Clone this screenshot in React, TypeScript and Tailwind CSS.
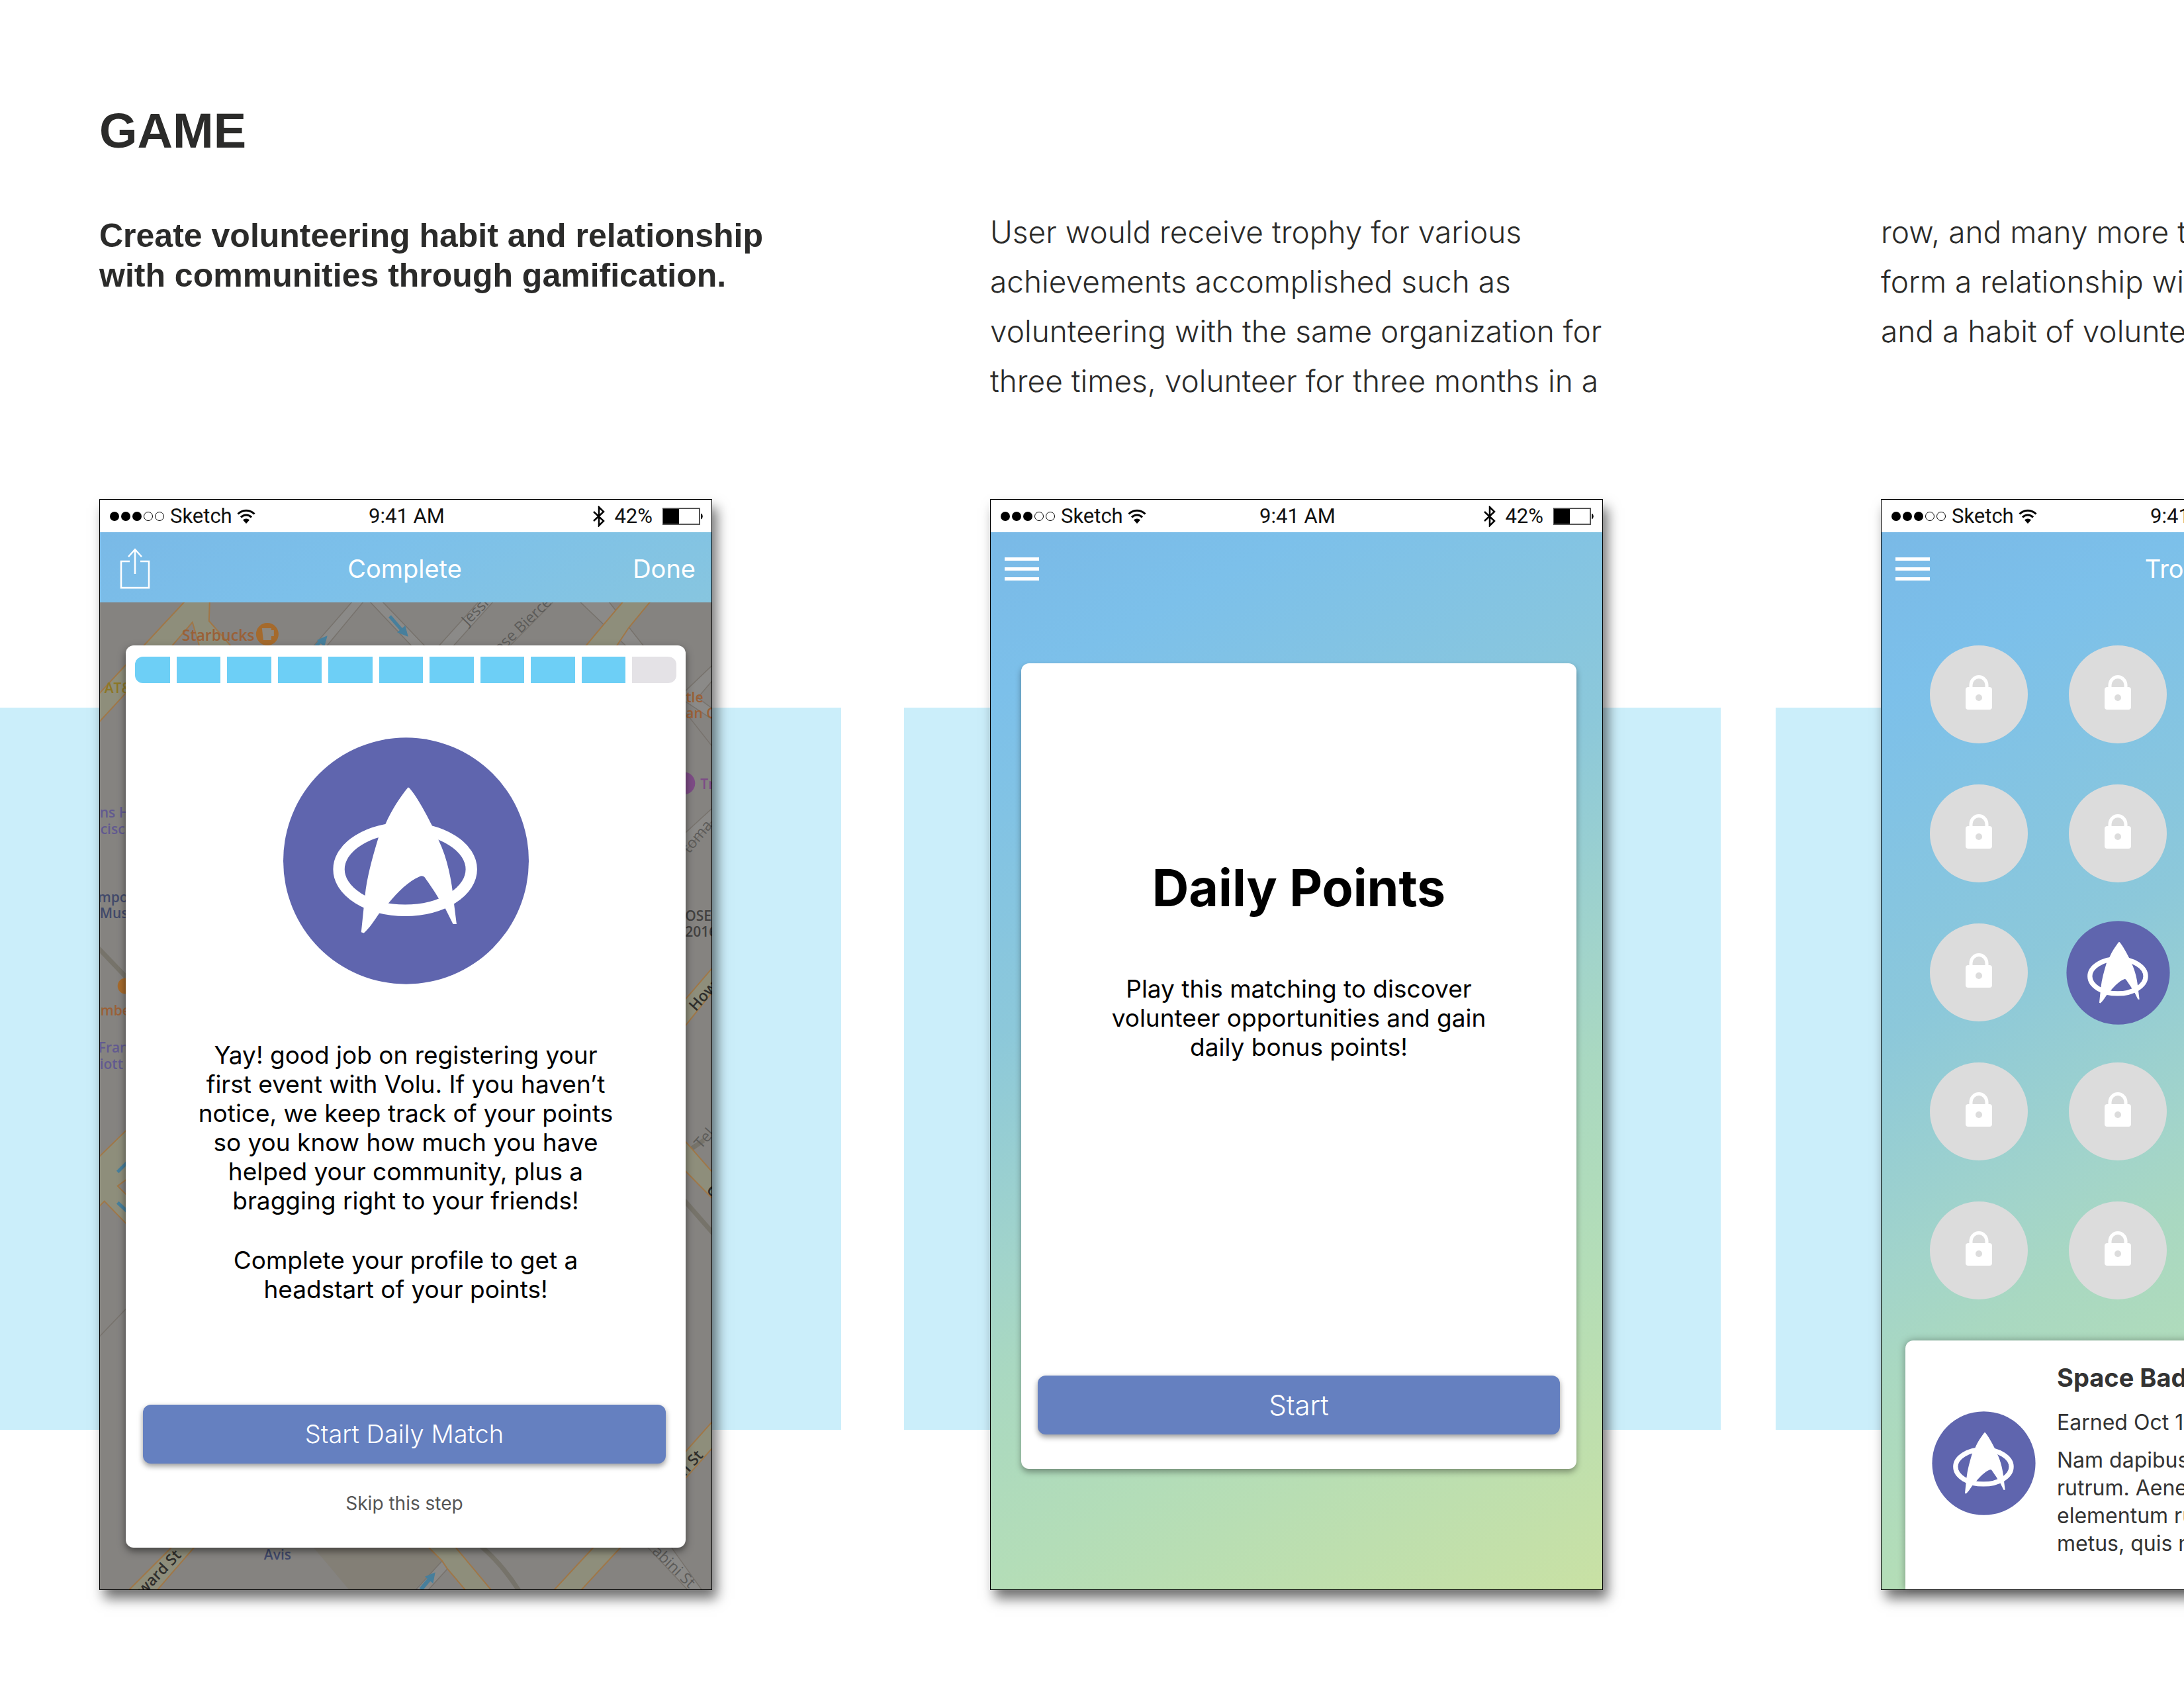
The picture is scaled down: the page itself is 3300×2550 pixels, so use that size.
import type { ReactNode } from "react";

function Badge({ className }: { className: string }) {
  return (
    <svg viewBox="82 100 1114 1118" className={className} role="img" aria-label="Space badge">
      <ellipse cx="639" cy="659" rx="556" ry="558" fill="#5f65ae" />
      <ellipse cx="635" cy="697" rx="300" ry="186" fill="none" stroke="#fff" strokeWidth="52" />
      <path
        fill="#fff"
        d="M647 328 C612 370 572 432 547 490 L515 550 C488 640 462 730 453 818 L436 982 L448 986 C472 964 494 932 517 897 L560 850 C604 796 650 752 700 730 Q714 723 724 734 C742 760 768 796 790 834 L818 877 L852 945 L868 945 L856 850 C846 740 824 640 784 560 L755 496 C728 440 684 362 655 330 Q647 324 647 328 Z"
      />
    </svg>
  );
}

function Lock() {
  return (
    <div className="flex size-[148px] items-center justify-center rounded-full bg-[#dcdcdc] pb-[6px]">
      <svg viewBox="0 0 40 52" className="h-[52px] w-[40px]" role="img" aria-label="Locked">
        <path d="M8 21V15a12 12.5 0 0 1 24 0v6" fill="none" stroke="#fff" strokeWidth="5" />
        <rect y="18" width="40" height="34" rx="4" fill="#fff" />
        <ellipse cx="20" cy="34" rx="5" ry="5" fill="#dcdcdc" />
      </svg>
    </div>
  );
}

function StatusBar() {
  return (
    <div className="grid h-[49px] grid-cols-[1fr_auto_1fr] items-center bg-white pl-[15px] pr-[12px] pt-px font-['Roboto',sans-serif] text-[31px] leading-[36px] text-[#111]">
      <div className="flex items-center">
        <div className="flex gap-[3px]">
          <span className="size-[14px] rounded-full bg-black" />
          <span className="size-[14px] rounded-full bg-black" />
          <span className="size-[14px] rounded-full bg-black" />
          <span className="size-[14px] rounded-full border border-black" />
          <span className="size-[14px] rounded-full border border-black" />
        </div>
        <span className="ml-[9px]">Sketch</span>
        <svg viewBox="0 0 28 22" className="ml-[7px] h-[22px] w-[28px]" aria-hidden="true">
          <g fill="none" stroke="#000" strokeWidth="3">
            <path d="M1.5 7.5a17.5 17.5 0 0 1 25 0" />
            <path d="M6 12.5a11 11 0 0 1 16 0" />
          </g>
          <path d="M14 22l-5-5.500a7 7 0 0 1 10 0z" />
        </svg>
      </div>
      <span>9:41 AM</span>
      <div className="flex items-center justify-end">
        <svg viewBox="0 0 20 32" className="h-[32px] w-[20px]" aria-hidden="true">
          <path d="M2 9l15 14-7 7V2l7 7L2 23" fill="none" stroke="#000" strokeWidth="2.500" />
        </svg>
        <span className="ml-[13px]">42%</span>
        <svg viewBox="0 0 62 26" className="ml-[15px] h-[26px] w-[62px]" aria-hidden="true">
          <rect x="1" y="1" width="55" height="24" fill="#fff" stroke="#555" strokeWidth="2" />
          <rect x="1" y="2" width="24" height="22" />
          <path d="M58 8.500a5 5 0 0 1 0 9z" />
        </svg>
      </div>
    </div>
  );
}

function Phone({ left, title, right, children }: { left: ReactNode; title?: string; right?: ReactNode; children: ReactNode }) {
  return (
    <article className="flex h-full flex-col border border-black bg-[linear-gradient(152deg,#79b8e6_0%,#7cc0ea_14%,#8cc8da_38%,#a2d4ca_55%,#a9d8c1_62%,#b3ddb8_76%,#c9e1a4_100%)] font-['Inter',sans-serif] shadow-[7px_13px_18px_rgba(0,0,0,0.56)]">
      <StatusBar />
      <header className="grid h-[106px] grid-cols-[1fr_auto_1fr] items-center pl-[21px] pr-[24px] pt-[4px] text-[38px] leading-[46px] text-white">
        <div className="flex">{left}</div>
        <h2>{title}</h2>
        <div className="flex justify-end">{right}</div>
      </header>
      {children}
    </article>
  );
}

function MenuButton() {
  return (
    <button type="button" aria-label="Menu" className="flex w-[52px] flex-col gap-[10px]">
      <span className="h-[5px] bg-white" />
      <span className="h-[5px] bg-white" />
      <span className="h-[5px] bg-white" />
    </button>
  );
}

function ShareButton() {
  return (
    <button type="button" aria-label="Share" className="ml-[9px]">
      <svg viewBox="0 0 46 62" className="h-[62px] w-[46px]" fill="none" stroke="#fff" strokeWidth="2.500">
        <path d="M15 20H2v40h42V20H31" />
        <path d="M23 39V2M13 13L23 2l10 11" />
      </svg>
    </button>
  );
}

function PrimaryButton({ children, className }: { children: ReactNode; className: string }) {
  return (
    <button
      type="button"
      className={`h-[89px] w-full rounded-[12px] bg-[#6580c0] font-light text-white shadow-[0_4px_8px_rgba(0,0,0,0.4)] ${className}`}
    >
      {children}
    </button>
  );
}

function StreetMap() {
  return (
    <svg
      viewBox="0 0 924 1490"
      preserveAspectRatio="xMidYMid slice"
      className="absolute inset-0 h-full w-full"
      fontFamily="'Open Sans', sans-serif"
      fontSize="21"
      fontWeight="600"
      aria-hidden="true"
    >
      <rect width="924" height="1490" fill="#858380" />
      <path d="M323 1427H495L517 1447L476 1490H376Z" fill="#837f76" />
      <g fill="#8b8a88" stroke="#77726c" strokeWidth="1.500">
        <path d="M382 -2L321 68H341L399 -2Z" />
        <path d="M407 -2L473 68H493L426 -2Z" />
        <path d="M573 -2L510 68H532L595 -2Z" />
        <path d="M724 -2L797 68H823L768 -2Z" />
        <path d="M882 136L930 90V112L903 144L930 164V180L882 148Z" />
        <path d="M882 163L930 224" fill="none" />
        <path d="M882 350L930 306V324L882 378Z" />
        <path d="M517 1447L525 1459L495 1492H476Z" />
        <path d="M826 1425L889 1492H910L862 1425Z" />
        <path d="M-2 1110L42 1064" fill="none" />
        <path d="M686 -2L617 68" fill="none" />
      </g>
      <g fill="none" stroke="#76736a" strokeWidth="7">
        <path d="M-2 522L42 568" />
        <path d="M882 902L930 957" />
        <path d="M893 825L912 812" />
        <path d="M576 1425C600 1446 618 1468 633 1492" />
      </g>
      <g fill="#8e8e7b" stroke="#a07747" strokeWidth="2">
        <path d="M129 -2L-2 139V182L42 134L107 68L140 30L151 68H200L165 28L166 -2Z" />
        <path d="M791 -2L757 38L732 68H779L799 38L832 -2Z" />
        <path d="M-2 838L42 795V870L27 881L42 896V940L7 904L-2 913Z" />
        <path d="M882 602L930 546V582L882 642Z" />
        <path d="M882 811L930 866V905L882 856Z" />
        <path d="M882 1285L930 1231V1271L882 1325Z" />
        <path d="M110 1425L43 1492H86L144 1425Z" />
        <path d="M495 1425L517 1447L525 1459L553 1492H592L536 1425Z" />
        <path d="M747 1425L685 1492H726L788 1425Z" />
      </g>
      <g fill="#477f9c" stroke="#477f9c">
        <path d="M438 21L458 44" strokeWidth="5" />
        <path d="M465 51l-15-6 11-9z" />
        <path d="M325 68L334 58" strokeWidth="5" />
        <path d="M343 51l-4 15-10-9z" />
        <path d="M27 860L42 845M27 906L42 920" strokeWidth="5" />
        <path d="M485 1490L500 1472" strokeWidth="6" />
        <path d="M506 1465l-3 15-11-9z" />
      </g>
      <g fill="#9a6036">
        <circle cx="253" cy="48" r="17" fill="#a56a2c" />
        <path d="M245 39h14v3h4v9h-4v6h-12z" fill="#8d8880" />
        <circle cx="39" cy="579" r="12" fill="#a56a2c" />
        <text x="124" y="58" fontSize="23">Starbucks</text>
        <text x="1" y="624">mbe</text>
        <text x="885" y="151">tle</text>
        <text x="885" y="175">an C</text>
      </g>
      <text x="7" y="137" fill="#8d7726">AT&amp;T</text>
      <g fill="#625a90">
        <text x="0" y="325">ns H</text>
        <text x="1" y="350">cisc</text>
        <text x="-2" y="680">Fran</text>
        <text x="0" y="705">iott</text>
      </g>
      <g fill="#41496a">
        <text x="-3" y="453">mpo</text>
        <text x="0" y="477">Mus</text>
        <text x="248" y="1445">Avis</text>
      </g>
      <circle cx="882" cy="273" r="17" fill="#7d4c86" />
      <text x="907" y="282" fill="#7d4c86">Tr</text>
      <g fill="#424140">
        <text x="884" y="481">OSE</text>
        <text x="884" y="505">2016</text>
      </g>
      <g fill="#5c5b59" fontWeight="400" fontSize="23">
        <text transform="translate(556 36) rotate(-46)">Jessie St</text>
        <text transform="translate(604 78) rotate(-44)">ose Bierce</text>
        <text transform="translate(890 380) rotate(-50)">toma</text>
        <text transform="translate(908 826) rotate(-48)">Tel</text>
        <text transform="translate(833 1434) rotate(44)">abini St</text>
      </g>
      <g fill="#2f2e2c" fontSize="23">
        <text transform="translate(900 618) rotate(-48)">How</text>
        <text transform="translate(915 888) rotate(46)">C</text>
        <text transform="translate(884 1320) rotate(-48)">n St</text>
        <text transform="translate(66 1500) rotate(-46)">ward St</text>
      </g>
    </svg>
  );
}

const bodyLines = [
  [
    "User would receive trophy for various",
    "achievements accomplished such as",
    "volunteering with the same organization for",
    "three times, volunteer for three months in a",
  ],
  ["row, and many more to help users", "form a relationship with communities", "and a habit of volunteering."],
];

const badges = Array.from({ length: 20 }, (_, i) => i === 9);

export default function App() {
  return (
    <main className="min-h-screen w-full overflow-hidden bg-white pb-[148px] text-[#2b2b2a]">
      <h1 className="pl-[150px] pt-[158px] font-['Liberation_Sans',sans-serif] text-[74px] font-bold leading-[80px]">GAME</h1>

      <section className="mt-[75px] grid grid-cols-[repeat(3,minmax(1346px,1fr))] pl-[150px]">
        <p className="pt-[13px] font-['Liberation_Sans',sans-serif] text-[50px] font-bold leading-[60px]">
          Create volunteering habit and relationship
          <br />
          with communities through gamification.
        </p>
        {bodyLines.map((lines) => (
          <p key={lines[0]} className="whitespace-nowrap font-['Inter',sans-serif] text-[46px] font-light leading-[75px]">
            {lines.map((line) => (
              <span key={line} className="block">
                {line}
              </span>
            ))}
          </p>
        ))}
      </section>

      <section className="mt-[141px] grid grid-cols-[minmax(0,1fr)]">
        <div className="col-start-1 row-start-1 mb-[242px] mt-[315px] grid grid-cols-[1271fr_95fr_1234fr_83fr_617fr]" aria-hidden="true">
          <div className="bg-[#cbeefa]" />
          <div />
          <div className="bg-[#cbeefa]" />
          <div />
          <div className="bg-[#cbeefa]" />
        </div>

        <div className="col-start-1 row-start-1 grid grid-cols-[repeat(3,minmax(926px,1fr))] gap-x-[420px] pl-[150px]">
          <Phone left={<ShareButton />} title="Complete" right={<button type="button">Done</button>}>
            <div className="relative flex flex-1 flex-col overflow-hidden px-[39px] pb-[63px] pt-[65px]">
              <StreetMap />
              <div className="relative flex flex-1 flex-col items-center rounded-[12px] bg-white pb-[50px] pt-[17px] text-black shadow-[0_5px_12px_rgba(0,0,0,0.5)]">
                <div
                  role="progressbar"
                  aria-label="Points"
                  aria-valuenow={10}
                  aria-valuemin={0}
                  aria-valuemax={11}
                  className="grid h-[40px] w-full grid-cols-[53fr_repeat(10,67fr)] gap-[10px] px-[14px]"
                >
                  <span className="rounded-l-[12px] bg-[#6dcff6]" />
                  {Array.from({ length: 9 }, (_, i) => (
                    <span key={i} className="bg-[#6dcff6]" />
                  ))}
                  <span className="rounded-r-[12px] bg-[#e4e2e6]" />
                </div>
                <Badge className="mt-[82px] size-[373px]" />
                <div className="mt-[85px] flex flex-col gap-[46px] text-center text-[37px] leading-[44px]">
                  <p>
                    Yay! good job on registering your
                    <br />
                    first event with Volu. If you haven’t
                    <br />
                    notice, we keep track of your points
                    <br />
                    so you know how much you have
                    <br />
                    helped your community, plus a
                    <br />
                    bragging right to your friends!
                  </p>
                  <p>
                    Complete your profile to get a
                    <br />
                    headstart of your points!
                  </p>
                </div>
                <div className="mt-[152px] flex w-full flex-col items-center pl-[26px] pr-[30px]">
                  <PrimaryButton className="text-[38px]">Start Daily Match</PrimaryButton>
                  <button type="button" className="mt-[43px] text-[28px] leading-[34px] text-[#555]">
                    Skip this step
                  </button>
                </div>
              </div>
            </div>
          </Phone>

          <Phone left={<MenuButton />}>
            <div className="mb-[182px] ml-[46px] mr-[39px] mt-[92px] flex flex-1 flex-col items-center rounded-[12px] bg-white px-[25px] pb-[52px] pt-[293px] text-center text-black shadow-[0_5px_10px_rgba(0,0,0,0.35)]">
              <h3 className="text-[77px] font-bold leading-[92px]">Daily Points</h3>
              <p className="mb-auto mt-[85px] text-[37px] leading-[44px]">
                Play this matching to discover
                <br />
                volunteer opportunities and gain
                <br />
                daily bonus points!
              </p>
              <PrimaryButton className="text-[42px]">Start</PrimaryButton>
            </div>
          </Phone>

          <Phone left={<MenuButton />} title="Trophy">
            <div className="mx-[73px] mt-[65px] grid auto-rows-[148px] grid-cols-[repeat(4,148px)] place-items-center justify-between gap-y-[62px]">
              {badges.map((earned, i) => (earned ? <Badge key={i} className="size-[157px] max-w-none" /> : <Lock key={i} />))}
            </div>
            <div className="mx-[36px] mt-[62px] flex flex-1 items-start gap-[32px] overflow-hidden whitespace-nowrap rounded-t-[12px] bg-white pb-[47px] pl-[40px] text-[32px] text-[#333] shadow-[0_0_12px_rgba(0,0,0,0.35)]">
              <Badge className="mt-[107px] size-[157px] shrink-0" />
              <div className="pt-[33px]">
                <h3 className="text-[38px] font-bold leading-[46px]">Space Badge</h3>
                <p className="mt-[25px] leading-[40px]">Earned Oct 12, 2016</p>
                <p className="mt-[16px] leading-[42px]">
                  Nam dapibus nisl vitae elit fringilla
                  <br />
                  rutrum. Aenean sollicitudin, erat a
                  <br />
                  elementum rutrum, neque sem
                  <br />
                  metus, quis mollis nisl nunc et
                </p>
              </div>
            </div>
          </Phone>
        </div>
      </section>
    </main>
  );
}
